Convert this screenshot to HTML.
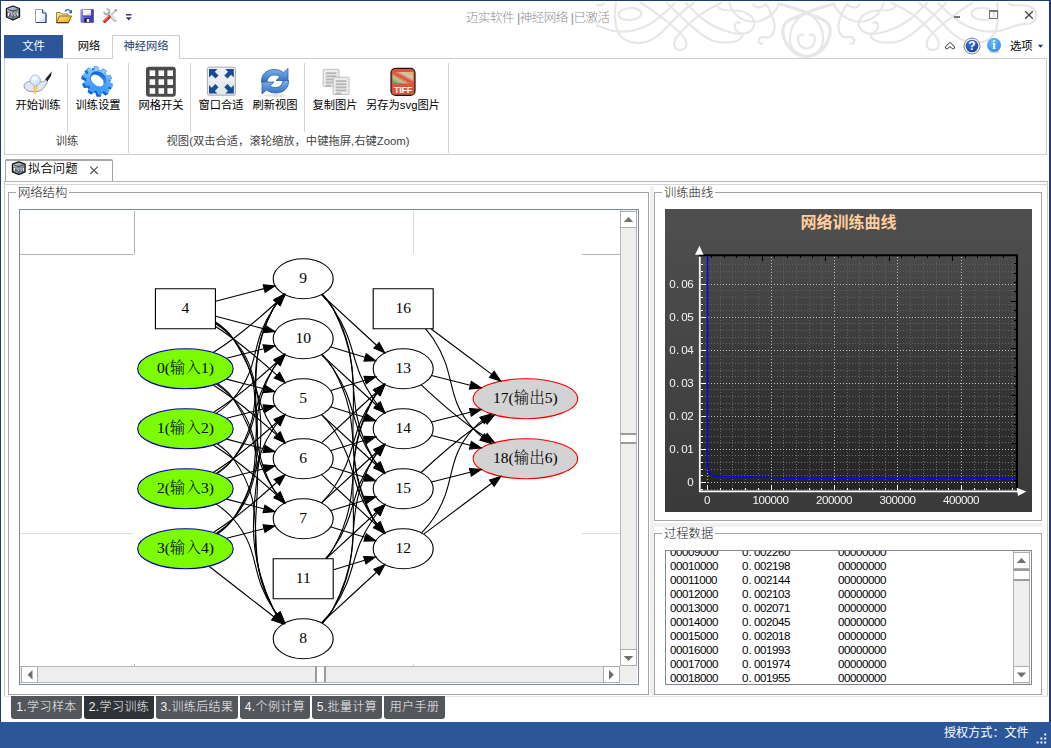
<!DOCTYPE html>
<html lang="zh-CN"><head><meta charset="utf-8"><title>迈实软件 |神经网络 |已激活</title>
<style>
*{box-sizing:border-box;margin:0;padding:0}
html,body{width:1051px;height:748px;overflow:hidden;background:#fff}
body{position:relative;font:12px/14px "Liberation Sans","Noto Sans CJK SC",sans-serif;color:#000}
.a{position:absolute}
.t{position:absolute;white-space:nowrap}
.c{position:absolute;white-space:nowrap;text-align:center;font-size:11.3px}
.sep{position:absolute;width:1px;background:#d4d4d4}
.gb{position:absolute;border:1px solid #a5a5a5}
.gbl{position:absolute;background:#fff;padding:0 2px;white-space:nowrap;color:#111;font-size:12.3px;font-weight:300}
.btab{position:absolute;top:696px;height:23px;background:#53565b;color:#f4f4f4;border-radius:0 0 3px 3px;text-align:center;line-height:23px;white-space:nowrap;font-size:12px;letter-spacing:.4px;font-weight:300}
.sb{position:absolute;background:#eee}
.sbtn{position:absolute;background:#fff;border:1px solid #adadad}
.mono{font-family:"Liberation Mono","Noto Sans CJK SC",monospace}
.row{position:absolute;left:0;height:14px;white-space:nowrap;font:11.6px/14px "Liberation Sans",sans-serif;letter-spacing:-.45px;color:#000}
.row span{position:absolute;top:0}
.row i{font-style:normal;letter-spacing:2.35px;margin-left:.4px}
</style></head><body>
<!-- title bar -->
<div class="a" style="left:0;top:0;width:1051px;height:35px;background:#fff"></div>
<svg class="a" style="left:596px;top:1px" width="453" height="57" viewBox="596 1 453 57" fill="none" stroke="#e7e7e7" stroke-width="2.200" stroke-linecap="round"><g>
<path d="M604 3.500C598 8 589 3 582 7C573 12 576 24 587 24C596 24 601 27 607 29C612 31 616 31.500 620 31.500C632 32 641 29 650 24C659 19 667 11 674.500 3.500"/>
<path d="M616 3C614.500 10 614.500 22 617 30C620 38 628 43 639 43C650 43 660 35 668 26C675 18 685 9 693.500 3"/>
<ellipse cx="630" cy="14" rx="11.500" ry="6" transform="rotate(-4 630 14)"/>
<path d="M641 3C650 8 660 16 670 24C676 29 683 34 685.500 40C688 46 685 50 680 50C675 50 673 45 675 40C677 35 684 29 690 23C697 16 708 9 721 3"/>
<path d="M667 3C673 9 680 16 689 24C697 31 703 37 712 40.500C721 44 733 43 739 40C741.500 38 743 36 743 33.500"/>
<path d="M686 3C690 7 697 14 702 18.500C708 23 716 28 726 31C732 33 738 34 742 34"/>
<path d="M717 5C718 8 720 9.500 724 10C730 10.500 738 10 744 12C751 14.500 755.500 20 754 26C752.500 31 747 34 742 33.500C737 33 734.500 29 734.800 25.500C735 22.500 738 21.500 739.500 23"/>
<path d="M729.500 3C730.500 8 733 12 737 15.500C742 20 749 22.500 757 21.500C765 20 772 15 776 9.500C777.500 7.500 778.500 5.500 779 4"/>
<path d="M753.500 4.500C755 7 758 8 761 7C763 6.300 764.500 5 766 4.200C769 8 771.500 14 773.500 20C775.500 27 774.500 33 770.500 36.500C767.500 39 763.500 35.500 760.500 37.500C757.500 39.500 758 44.500 762.500 43.500"/>
<path d="M779 4C788 6 798 9 806.500 13C816 17.500 829 19 830 29C831 40 822 56 806.500 56.500" stroke-width="3.200"/>
<path d="M831 4.500C822 8 813 10.500 806.500 13C797 17 791 26 790 36C789 46 794 53 803 55.500"/>
<path d="M803 35C800 33 797.500 36 798 40C798.500 45 802 48.500 806.500 48.500"/>
</g><g transform="translate(1613 0) scale(-1 1)">
<path d="M604 3.500C598 8 589 3 582 7C573 12 576 24 587 24C596 24 601 27 607 29C612 31 616 31.500 620 31.500C632 32 641 29 650 24C659 19 667 11 674.500 3.500"/>
<path d="M616 3C614.500 10 614.500 22 617 30C620 38 628 43 639 43C650 43 660 35 668 26C675 18 685 9 693.500 3"/>
<ellipse cx="630" cy="14" rx="11.500" ry="6" transform="rotate(-4 630 14)"/>
<path d="M641 3C650 8 660 16 670 24C676 29 683 34 685.500 40C688 46 685 50 680 50C675 50 673 45 675 40C677 35 684 29 690 23C697 16 708 9 721 3"/>
<path d="M667 3C673 9 680 16 689 24C697 31 703 37 712 40.500C721 44 733 43 739 40C741.500 38 743 36 743 33.500"/>
<path d="M686 3C690 7 697 14 702 18.500C708 23 716 28 726 31C732 33 738 34 742 34"/>
<path d="M717 5C718 8 720 9.500 724 10C730 10.500 738 10 744 12C751 14.500 755.500 20 754 26C752.500 31 747 34 742 33.500C737 33 734.500 29 734.800 25.500C735 22.500 738 21.500 739.500 23"/>
<path d="M729.500 3C730.500 8 733 12 737 15.500C742 20 749 22.500 757 21.500C765 20 772 15 776 9.500C777.500 7.500 778.500 5.500 779 4"/>
<path d="M753.500 4.500C755 7 758 8 761 7C763 6.300 764.500 5 766 4.200C769 8 771.500 14 773.500 20C775.500 27 774.500 33 770.500 36.500C767.500 39 763.500 35.500 760.500 37.500C757.500 39.500 758 44.500 762.500 43.500"/>
<path d="M779 4C788 6 798 9 806.500 13C816 17.500 829 19 830 29C831 40 822 56 806.500 56.500" stroke-width="3.200"/>
<path d="M831 4.500C822 8 813 10.500 806.500 13C797 17 791 26 790 36C789 46 794 53 803 55.500"/>
<path d="M803 35C800 33 797.500 36 798 40C798.500 45 802 48.500 806.500 48.500"/>
</g></svg>
<div class="t" style="left:466px;top:10px;font-size:12.5px;letter-spacing:-.5px;line-height:16px;color:#8e8e8e;font-weight:300">迈实软件 |神经网络 |已激活</div>
<!-- ribbon tabs -->
<div class="a" style="left:4px;top:35px;width:59px;height:23px;background:#2b579a;color:#fff;text-align:center;line-height:23px;font-size:11.3px">文件</div>
<div class="c" style="left:69px;top:35px;width:40px;line-height:23px">网络</div>
<div class="a" style="left:4px;top:58px;width:1043px;height:97px;border:1px solid #cfcfcf;background:#fff"></div>
<div class="a" style="left:112px;top:35px;width:68px;height:24px;border:1px solid #cfcfcf;border-bottom:none;background:#fff;text-align:center;line-height:21px;color:#26406c;font-size:11.3px">神经网络</div>
<!-- ribbon content -->
<div class="c" style="left:8px;top:98px;width:60px">开始训练</div>
<div class="c" style="left:68px;top:98px;width:60px">训练设置</div>
<div class="c" style="left:131px;top:98px;width:60px">网格开关</div>
<div class="c" style="left:191px;top:98px;width:60px">窗口合适</div>
<div class="c" style="left:245px;top:98px;width:60px">刷新视图</div>
<div class="c" style="left:305px;top:98px;width:60px">复制图片</div>
<div class="c" style="left:358px;top:98px;width:90px">另存为svg图片</div>
<div class="c" style="left:37px;top:134px;width:60px;color:#444">训练</div>
<div class="c" style="left:138px;top:134px;width:300px;color:#444">视图(双击合适，滚轮缩放，中键拖屏,右键Zoom)</div>
<div class="sep" style="left:67px;top:63px;height:69px"></div>
<div class="sep" style="left:128px;top:63px;height:90px"></div>
<div class="sep" style="left:190px;top:63px;height:69px"></div>
<div class="sep" style="left:304px;top:63px;height:69px"></div>
<div class="sep" style="left:448px;top:63px;height:90px"></div>
<!-- right helpers -->
<div class="t" style="left:1010px;top:39px;font-size:11.3px">选项</div>
<!-- document tab -->
<div class="a" style="left:4px;top:181px;width:1044px;height:1px;background:#b4b4b4"></div>
<div class="a" style="left:5px;top:159px;width:108px;height:22px;border:1px solid #a2a2a2;border-top:2px solid #a8a8a8;border-bottom:none;border-radius:2px 2px 0 0;background:#fff"></div>
<div class="t" style="left:28px;top:161px;font-size:12.4px;line-height:16px;font-weight:350">拟合问题</div>
<!-- main frame -->
<div class="a" style="left:4px;top:182px;width:1044px;height:514px;border-left:1px solid #c8c8c8;border-right:1px solid #c8c8c8"></div>
<div class="a" style="left:4px;top:184px;width:1044px;height:1px;background:#d6d6d6"></div>
<div class="a" style="left:650px;top:186px;width:4px;height:509px;background:#f0f0f0"></div>
<!-- left group box -->
<div class="gb" style="left:8px;top:192px;width:641px;height:503px"></div>
<div class="gbl" style="left:16px;top:186px">网络结构</div>
<div class="a" style="left:19px;top:209px;width:620px;height:476px;border:1px solid #7f8a9c;background:#fff;overflow:hidden">
 <div class="a" style="left:0;top:44px;width:115px;height:1px;background:#b4b4b4"></div>
 <div class="a" style="left:561px;top:44px;width:39px;height:1px;background:#b4b4b4"></div>
 <div class="a" style="left:114px;top:1px;width:1px;height:44px;background:#b4b4b4"></div>
 <div class="a" style="left:114px;top:454px;width:1px;height:2px;background:#b4b4b4"></div>
 <div class="a" style="left:393px;top:1px;width:1px;height:43px;background:#dcdcdc"></div>
 <div class="a" style="left:393px;top:454px;width:1px;height:2px;background:#dcdcdc"></div>
 <div class="a" style="left:0;top:323px;width:114px;height:1px;background:#dcdcdc"></div>
 <div class="a" style="left:562px;top:323px;width:38px;height:1px;background:#dcdcdc"></div>
 <svg class="a" style="left:0;top:0" width="600" height="456" viewBox="20 210 600 456" font-family='"Liberation Serif","Noto Serif CJK SC",serif' font-size="14" font-weight="300">
 <g transform="translate(133.2 254.3) scale(1.1111) translate(4 364)">
<polygon fill="white" stroke="none" points="-4,4 -4,-364 400,-364 400,4 -4,4"/>
<g>
<ellipse fill="#7cfc00" stroke="#0000a8" cx="43" cy="-261" rx="43" ry="18"/>
<text text-anchor="middle" x="43" y="-257.0">0(输入1)</text>
</g>
<g>
<ellipse fill="none" stroke="black" cx="149" cy="-234" rx="27" ry="18"/>
<text text-anchor="middle" x="149" y="-230.0">5</text>
</g>
<g>
<path fill="none" stroke="black" d="M80.08,-251.63C90.93,-248.82 102.8,-245.73 113.54,-242.95"/>
<polygon fill="black" stroke="black" points="114.62,-246.28 123.42,-240.38 112.86,-239.51 114.62,-246.28"/>
</g>
<g>
<ellipse fill="none" stroke="black" cx="149" cy="-180" rx="27" ry="18"/>
<text text-anchor="middle" x="149" y="-176.0">6</text>
</g>
<g>
<path fill="none" stroke="black" d="M68.39,-246.17C74.27,-242.36 80.45,-238.16 86,-234 99.54,-223.83 113.85,-211.49 125.3,-201.18"/>
<polygon fill="black" stroke="black" points="127.69,-203.73 132.73,-194.41 122.98,-198.56 127.69,-203.73"/>
</g>
<g>
<ellipse fill="none" stroke="black" cx="149" cy="-126" rx="27" ry="18"/>
<text text-anchor="middle" x="149" y="-122.0">7</text>
</g>
<g>
<path fill="none" stroke="black" d="M70.73,-247.14C76.27,-243.41 81.71,-239 86,-234 111.64,-204.09 100,-185.68 122,-153 123.12,-151.34 124.34,-149.69 125.63,-148.07"/>
<polygon fill="black" stroke="black" points="128.46,-150.15 132.42,-140.33 123.2,-145.54 128.46,-150.15"/>
</g>
<g>
<ellipse fill="none" stroke="black" cx="149" cy="-18" rx="27" ry="18"/>
<text text-anchor="middle" x="149" y="-14.0">8</text>
</g>
<g>
<path fill="none" stroke="black" d="M72.06,-247.53C77.39,-243.82 82.41,-239.32 86,-234 133.85,-163.13 82.71,-120.95 122,-45 122.92,-43.22 123.99,-41.48 125.17,-39.8"/>
<polygon fill="black" stroke="black" points="128.03,-41.84 131.69,-31.9 122.63,-37.38 128.03,-41.84"/>
</g>
<g>
<ellipse fill="none" stroke="black" cx="149" cy="-342" rx="27" ry="18"/>
<text text-anchor="middle" x="149" y="-338.0">9</text>
</g>
<g>
<path fill="none" stroke="black" d="M68.39,-275.83C74.27,-279.64 80.45,-283.84 86,-288 99.54,-298.17 113.85,-310.51 125.3,-320.82"/>
<polygon fill="black" stroke="black" points="122.98,-323.44 132.73,-327.59 127.69,-318.27 122.98,-323.44"/>
</g>
<g>
<ellipse fill="none" stroke="black" cx="149" cy="-288" rx="27" ry="18"/>
<text text-anchor="middle" x="149" y="-284.0">10</text>
</g>
<g>
<path fill="none" stroke="black" d="M80.08,-270.37C90.93,-273.18 102.8,-276.27 113.54,-279.05"/>
<polygon fill="black" stroke="black" points="112.86,-282.49 123.42,-281.62 114.62,-275.72 112.86,-282.49"/>
</g>
<g>
<ellipse fill="#7cfc00" stroke="#0000a8" cx="43" cy="-207" rx="43" ry="18"/>
<text text-anchor="middle" x="43" y="-203.0">1(输入2)</text>
</g>
<g>
<path fill="none" stroke="black" d="M80.08,-216.37C90.93,-219.18 102.8,-222.27 113.54,-225.05"/>
<polygon fill="black" stroke="black" points="112.86,-228.49 123.42,-227.62 114.62,-221.72 112.86,-228.49"/>
</g>
<g>
<path fill="none" stroke="black" d="M80.08,-197.63C90.93,-194.82 102.8,-191.73 113.54,-188.95"/>
<polygon fill="black" stroke="black" points="114.62,-192.28 123.42,-186.38 112.86,-185.51 114.62,-192.28"/>
</g>
<g>
<path fill="none" stroke="black" d="M68.39,-192.17C74.27,-188.36 80.45,-184.16 86,-180 99.54,-169.83 113.85,-157.49 125.3,-147.18"/>
<polygon fill="black" stroke="black" points="127.69,-149.73 132.73,-140.41 122.98,-144.56 127.69,-149.73"/>
</g>
<g>
<path fill="none" stroke="black" d="M71.77,-193.32C77.12,-189.63 82.22,-185.18 86,-180 122.59,-129.83 91.49,-99.09 122,-45 122.98,-43.26 124.11,-41.54 125.32,-39.88"/>
<polygon fill="black" stroke="black" points="128.17,-41.93 131.93,-32.02 122.81,-37.42 128.17,-41.93"/>
</g>
<g>
<path fill="none" stroke="black" d="M70.73,-220.86C76.27,-224.59 81.71,-229 86,-234 111.64,-263.91 100,-282.32 122,-315 123.12,-316.66 124.34,-318.31 125.63,-319.93"/>
<polygon fill="black" stroke="black" points="123.2,-322.46 132.42,-327.67 128.46,-317.85 123.2,-322.46"/>
</g>
<g>
<path fill="none" stroke="black" d="M68.39,-221.83C74.27,-225.64 80.45,-229.84 86,-234 99.54,-244.17 113.85,-256.51 125.3,-266.82"/>
<polygon fill="black" stroke="black" points="122.98,-269.44 132.73,-273.59 127.69,-264.27 122.98,-269.44"/>
</g>
<g>
<ellipse fill="#7cfc00" stroke="#0000a8" cx="43" cy="-153" rx="43" ry="18"/>
<text text-anchor="middle" x="43" y="-149.0">2(输入3)</text>
</g>
<g>
<path fill="none" stroke="black" d="M68.39,-167.83C74.27,-171.64 80.45,-175.84 86,-180 99.54,-190.17 113.85,-202.51 125.3,-212.82"/>
<polygon fill="black" stroke="black" points="122.98,-215.44 132.73,-219.59 127.69,-210.27 122.98,-215.44"/>
</g>
<g>
<path fill="none" stroke="black" d="M80.08,-162.37C90.93,-165.18 102.8,-168.27 113.54,-171.05"/>
<polygon fill="black" stroke="black" points="112.86,-174.49 123.42,-173.62 114.62,-167.72 112.86,-174.49"/>
</g>
<g>
<path fill="none" stroke="black" d="M80.08,-143.63C90.93,-140.82 102.8,-137.73 113.54,-134.95"/>
<polygon fill="black" stroke="black" points="114.62,-138.28 123.42,-132.38 112.86,-131.51 114.62,-138.28"/>
</g>
<g>
<path fill="none" stroke="black" d="M70.73,-139.14C76.27,-135.41 81.71,-131 86,-126 111.64,-96.09 100,-77.68 122,-45 123.12,-43.34 124.34,-41.69 125.63,-40.07"/>
<polygon fill="black" stroke="black" points="128.46,-42.15 132.42,-32.33 123.2,-37.54 128.46,-42.15"/>
</g>
<g>
<path fill="none" stroke="black" d="M71.77,-166.68C77.12,-170.37 82.22,-174.82 86,-180 122.59,-230.17 91.49,-260.91 122,-315 122.98,-316.74 124.11,-318.46 125.32,-320.12"/>
<polygon fill="black" stroke="black" points="122.81,-322.58 131.93,-327.98 128.17,-318.07 122.81,-322.58"/>
</g>
<g>
<path fill="none" stroke="black" d="M70.73,-166.86C76.27,-170.59 81.71,-175 86,-180 111.64,-209.91 100,-228.32 122,-261 123.12,-262.66 124.34,-264.31 125.63,-265.93"/>
<polygon fill="black" stroke="black" points="123.2,-268.46 132.42,-273.67 128.46,-263.85 123.2,-268.46"/>
</g>
<g>
<ellipse fill="#7cfc00" stroke="#0000a8" cx="43" cy="-99" rx="43" ry="18"/>
<text text-anchor="middle" x="43" y="-95.0">3(输入4)</text>
</g>
<g>
<path fill="none" stroke="black" d="M70.73,-112.86C76.27,-116.59 81.71,-121 86,-126 111.64,-155.91 100,-174.32 122,-207 123.12,-208.66 124.34,-210.31 125.63,-211.93"/>
<polygon fill="black" stroke="black" points="123.2,-214.46 132.42,-219.67 128.46,-209.85 123.2,-214.46"/>
</g>
<g>
<path fill="none" stroke="black" d="M68.39,-113.83C74.27,-117.64 80.45,-121.84 86,-126 99.54,-136.17 113.85,-148.51 125.3,-158.82"/>
<polygon fill="black" stroke="black" points="122.98,-161.44 132.73,-165.59 127.69,-156.27 122.98,-161.44"/>
</g>
<g>
<path fill="none" stroke="black" d="M80.08,-108.37C90.93,-111.18 102.8,-114.27 113.54,-117.05"/>
<polygon fill="black" stroke="black" points="112.86,-120.49 123.42,-119.62 114.62,-113.72 112.86,-120.49"/>
</g>
<g>
<path fill="none" stroke="black" d="M64.55,-83C81.13,-70.08 104.55,-51.84 122.36,-37.97"/>
<polygon fill="black" stroke="black" points="124.86,-40.46 130.6,-31.55 120.56,-34.93 124.86,-40.46"/>
</g>
<g>
<path fill="none" stroke="black" d="M72.06,-112.47C77.39,-116.18 82.41,-120.68 86,-126 133.85,-196.87 82.71,-239.05 122,-315 122.92,-316.78 123.99,-318.52 125.17,-320.2"/>
<polygon fill="black" stroke="black" points="122.63,-322.62 131.69,-328.1 128.03,-318.16 122.63,-322.62"/>
</g>
<g>
<path fill="none" stroke="black" d="M71.77,-112.68C77.12,-116.37 82.22,-120.82 86,-126 122.59,-176.17 91.49,-206.91 122,-261 122.98,-262.74 124.11,-264.46 125.32,-266.12"/>
<polygon fill="black" stroke="black" points="122.81,-268.58 131.93,-273.98 128.17,-264.07 122.81,-268.58"/>
</g>
<g>
<polygon fill="none" stroke="black" points="70,-333 16,-333 16,-297 70,-297 70,-333"/>
<text text-anchor="middle" x="43" y="-311.0">4</text>
</g>
<g>
<path fill="none" stroke="black" d="M70.17,-299.01C75.5,-295.52 81.01,-291.75 86,-288 99.54,-277.83 113.85,-265.49 125.3,-255.18"/>
<polygon fill="black" stroke="black" points="127.69,-257.73 132.73,-248.41 122.98,-252.56 127.69,-257.73"/>
</g>
<g>
<path fill="none" stroke="black" d="M70.3,-301.44C75.98,-297.64 81.6,-293.13 86,-288 111.64,-258.09 100,-239.68 122,-207 123.12,-205.34 124.34,-203.69 125.63,-202.07"/>
<polygon fill="black" stroke="black" points="128.46,-204.15 132.42,-194.33 123.2,-199.54 128.46,-204.15"/>
</g>
<g>
<path fill="none" stroke="black" d="M70.03,-302.5C76,-298.58 81.81,-293.74 86,-288 122.59,-237.83 91.49,-207.09 122,-153 122.98,-151.26 124.11,-149.54 125.32,-147.88"/>
<polygon fill="black" stroke="black" points="128.17,-149.93 131.93,-140.02 122.81,-145.42 128.17,-149.93"/>
</g>
<g>
<path fill="none" stroke="black" d="M70.05,-303.1C76.17,-299.13 82.05,-294.12 86,-288 145.22,-196.28 73.84,-142.98 122,-45 122.88,-43.2 123.93,-41.45 125.09,-39.75"/>
<polygon fill="black" stroke="black" points="127.94,-41.79 131.56,-31.83 122.52,-37.36 127.94,-41.79"/>
</g>
<g>
<path fill="none" stroke="black" d="M70.24,-321.81C83.41,-325.23 99.53,-329.42 113.67,-333.09"/>
<polygon fill="black" stroke="black" points="112.99,-336.53 123.55,-335.65 114.75,-329.75 112.99,-336.53"/>
</g>
<g>
<path fill="none" stroke="black" d="M70.24,-308.19C83.41,-304.77 99.53,-300.58 113.67,-296.91"/>
<polygon fill="black" stroke="black" points="114.75,-300.25 123.55,-294.35 112.99,-293.47 114.75,-300.25"/>
</g>
<g>
<ellipse fill="none" stroke="black" cx="239" cy="-99" rx="27" ry="18"/>
<text text-anchor="middle" x="239" y="-95.0">12</text>
</g>
<g>
<path fill="none" stroke="black" d="M165.58,-219.67C169.28,-215.79 173.02,-211.43 176,-207 198,-174.32 190,-158.68 212,-126 213.12,-124.34 214.34,-122.69 215.63,-121.07"/>
<polygon fill="black" stroke="black" points="218.46,-123.15 222.42,-113.33 213.2,-118.54 218.46,-123.15"/>
</g>
<g>
<ellipse fill="none" stroke="black" cx="239" cy="-261" rx="27" ry="18"/>
<text text-anchor="middle" x="239" y="-257.0">13</text>
</g>
<g>
<path fill="none" stroke="black" d="M174.05,-241.38C183.44,-244.26 194.36,-247.61 204.5,-250.72"/>
<polygon fill="black" stroke="black" points="203.7,-254.14 214.29,-253.72 205.75,-247.45 203.7,-254.14"/>
</g>
<g>
<ellipse fill="none" stroke="black" cx="239" cy="-207" rx="27" ry="18"/>
<text text-anchor="middle" x="239" y="-203.0">14</text>
</g>
<g>
<path fill="none" stroke="black" d="M174.05,-226.62C183.44,-223.74 194.36,-220.39 204.5,-217.28"/>
<polygon fill="black" stroke="black" points="205.75,-220.55 214.29,-214.28 203.7,-213.86 205.75,-220.55"/>
</g>
<g>
<ellipse fill="none" stroke="black" cx="239" cy="-153" rx="27" ry="18"/>
<text text-anchor="middle" x="239" y="-149.0">15</text>
</g>
<g>
<path fill="none" stroke="black" d="M165.73,-219.52C179.37,-206.96 199.3,-188.62 214.77,-174.38"/>
<polygon fill="black" stroke="black" points="217.42,-176.7 222.4,-167.36 212.68,-171.55 217.42,-176.7"/>
</g>
<g>
<path fill="none" stroke="black" d="M165.73,-165.52C179.37,-152.96 199.3,-134.62 214.77,-120.38"/>
<polygon fill="black" stroke="black" points="217.42,-122.7 222.4,-113.36 212.68,-117.55 217.42,-122.7"/>
</g>
<g>
<path fill="none" stroke="black" d="M165.73,-194.48C179.37,-207.04 199.3,-225.38 214.77,-239.62"/>
<polygon fill="black" stroke="black" points="212.68,-242.45 222.4,-246.64 217.42,-237.3 212.68,-242.45"/>
</g>
<g>
<path fill="none" stroke="black" d="M174.05,-187.38C183.44,-190.26 194.36,-193.61 204.5,-196.72"/>
<polygon fill="black" stroke="black" points="203.7,-200.14 214.29,-199.72 205.75,-193.45 203.7,-200.14"/>
</g>
<g>
<path fill="none" stroke="black" d="M174.05,-172.62C183.44,-169.74 194.36,-166.39 204.5,-163.28"/>
<polygon fill="black" stroke="black" points="205.75,-166.55 214.29,-160.28 203.7,-159.86 205.75,-166.55"/>
</g>
<g>
<path fill="none" stroke="black" d="M174.05,-118.62C183.44,-115.74 194.36,-112.39 204.5,-109.28"/>
<polygon fill="black" stroke="black" points="205.75,-112.55 214.29,-106.28 203.7,-105.86 205.75,-112.55"/>
</g>
<g>
<path fill="none" stroke="black" d="M165.58,-140.33C169.28,-144.21 173.02,-148.57 176,-153 198,-185.68 190,-201.32 212,-234 213.12,-235.66 214.34,-237.31 215.63,-238.93"/>
<polygon fill="black" stroke="black" points="213.2,-241.46 222.42,-246.67 218.46,-236.85 213.2,-241.46"/>
</g>
<g>
<path fill="none" stroke="black" d="M165.73,-140.48C179.37,-153.04 199.3,-171.38 214.77,-185.62"/>
<polygon fill="black" stroke="black" points="212.68,-188.45 222.4,-192.64 217.42,-183.3 212.68,-188.45"/>
</g>
<g>
<path fill="none" stroke="black" d="M174.05,-133.38C183.44,-136.26 194.36,-139.61 204.5,-142.72"/>
<polygon fill="black" stroke="black" points="203.7,-146.14 214.29,-145.72 205.75,-139.45 203.7,-146.14"/>
</g>
<g>
<path fill="none" stroke="black" d="M165.73,-32.48C179.37,-45.04 199.3,-63.38 214.77,-77.62"/>
<polygon fill="black" stroke="black" points="212.68,-80.45 222.4,-84.64 217.42,-75.3 212.68,-80.45"/>
</g>
<g>
<path fill="none" stroke="black" d="M166.31,-31.9C170,-35.79 173.55,-40.26 176,-45 215.29,-120.95 172.71,-158.05 212,-234 212.92,-235.78 213.99,-237.52 215.17,-239.2"/>
<polygon fill="black" stroke="black" points="212.63,-241.62 221.69,-247.1 218.03,-237.16 212.63,-241.62"/>
</g>
<g>
<path fill="none" stroke="black" d="M166.07,-32.02C169.77,-35.91 173.38,-40.35 176,-45 206.51,-99.09 181.49,-125.91 212,-180 212.98,-181.74 214.11,-183.46 215.32,-185.12"/>
<polygon fill="black" stroke="black" points="212.81,-187.58 221.93,-192.98 218.17,-183.07 212.81,-187.58"/>
</g>
<g>
<path fill="none" stroke="black" d="M165.58,-32.33C169.28,-36.21 173.02,-40.57 176,-45 198,-77.68 190,-93.32 212,-126 213.12,-127.66 214.34,-129.31 215.63,-130.93"/>
<polygon fill="black" stroke="black" points="213.2,-133.46 222.42,-138.67 218.46,-128.85 213.2,-133.46"/>
</g>
<g>
<path fill="none" stroke="black" d="M166.31,-328.1C170,-324.21 173.55,-319.74 176,-315 215.29,-239.05 172.71,-201.95 212,-126 212.92,-124.22 213.99,-122.48 215.17,-120.8"/>
<polygon fill="black" stroke="black" points="218.03,-122.84 221.69,-112.9 212.63,-118.38 218.03,-122.84"/>
</g>
<g>
<path fill="none" stroke="black" d="M165.73,-327.52C179.37,-314.96 199.3,-296.62 214.77,-282.38"/>
<polygon fill="black" stroke="black" points="217.42,-284.7 222.4,-275.36 212.68,-279.55 217.42,-284.7"/>
</g>
<g>
<path fill="none" stroke="black" d="M165.58,-327.67C169.28,-323.79 173.02,-319.43 176,-315 198,-282.32 190,-266.68 212,-234 213.12,-232.34 214.34,-230.69 215.63,-229.07"/>
<polygon fill="black" stroke="black" points="218.46,-231.15 222.42,-221.33 213.2,-226.54 218.46,-231.15"/>
</g>
<g>
<path fill="none" stroke="black" d="M166.07,-327.98C169.77,-324.09 173.38,-319.65 176,-315 206.51,-260.91 181.49,-234.09 212,-180 212.98,-178.26 214.11,-176.54 215.32,-174.88"/>
<polygon fill="black" stroke="black" points="218.17,-176.93 221.93,-167.02 212.81,-172.42 218.17,-176.93"/>
</g>
<g>
<path fill="none" stroke="black" d="M166.07,-273.98C169.77,-270.09 173.38,-265.65 176,-261 206.51,-206.91 181.49,-180.09 212,-126 212.98,-124.26 214.11,-122.54 215.32,-120.88"/>
<polygon fill="black" stroke="black" points="218.17,-122.93 221.93,-113.02 212.81,-118.42 218.17,-122.93"/>
</g>
<g>
<path fill="none" stroke="black" d="M174.05,-280.62C183.44,-277.74 194.36,-274.39 204.5,-271.28"/>
<polygon fill="black" stroke="black" points="205.75,-274.55 214.29,-268.28 203.7,-267.86 205.75,-274.55"/>
</g>
<g>
<path fill="none" stroke="black" d="M165.73,-273.52C179.37,-260.96 199.3,-242.62 214.77,-228.38"/>
<polygon fill="black" stroke="black" points="217.42,-230.7 222.4,-221.36 212.68,-225.55 217.42,-230.7"/>
</g>
<g>
<path fill="none" stroke="black" d="M165.58,-273.67C169.28,-269.79 173.02,-265.43 176,-261 198,-228.32 190,-212.68 212,-180 213.12,-178.34 214.34,-176.69 215.63,-175.07"/>
<polygon fill="black" stroke="black" points="218.46,-177.15 222.42,-167.33 213.2,-172.54 218.46,-177.15"/>
</g>
<g>
<polygon fill="none" stroke="black" points="176,-90 122,-90 122,-54 176,-54 176,-90"/>
<text text-anchor="middle" x="149" y="-68.0">11</text>
</g>
<g>
<path fill="none" stroke="black" d="M176.4,-80.1C185.18,-82.79 195.07,-85.83 204.32,-88.67"/>
<polygon fill="black" stroke="black" points="203.43,-92.05 214.02,-91.64 205.48,-85.36 203.43,-92.05"/>
</g>
<g>
<path fill="none" stroke="black" d="M169.79,-90.19C172.12,-92.97 174.27,-95.94 176,-99 206.51,-153.09 181.49,-179.91 212,-234 212.98,-235.74 214.11,-237.46 215.32,-239.12"/>
<polygon fill="black" stroke="black" points="212.81,-241.58 221.93,-246.98 218.17,-237.07 212.81,-241.58"/>
</g>
<g>
<path fill="none" stroke="black" d="M169.09,-90.15C171.58,-92.98 173.97,-95.98 176,-99 198,-131.68 190,-147.32 212,-180 213.12,-181.66 214.34,-183.31 215.63,-184.93"/>
<polygon fill="black" stroke="black" points="213.2,-187.46 222.42,-192.67 218.46,-182.85 213.2,-187.46"/>
</g>
<g>
<path fill="none" stroke="black" d="M169.97,-90.38C183.28,-102.63 200.82,-118.78 214.76,-131.61"/>
<polygon fill="black" stroke="black" points="212.76,-134.53 222.49,-138.72 217.5,-129.38 212.76,-134.53"/>
</g>
<g>
<ellipse fill="lightgray" stroke="red" cx="349" cy="-234" rx="47" ry="18"/>
<text text-anchor="middle" x="349" y="-230.0">17(输出5)</text>
</g>
<g>
<path fill="none" stroke="black" d="M255.58,-113.33C259.28,-117.21 263.02,-121.57 266,-126 288,-158.68 275.75,-177.62 302,-207 304.35,-209.64 307.03,-212.08 309.87,-214.34"/>
<polygon fill="black" stroke="black" points="308.04,-217.33 318.23,-220.21 312.06,-211.6 308.04,-217.33"/>
</g>
<g>
<ellipse fill="lightgray" stroke="red" cx="349" cy="-180" rx="47" ry="18"/>
<text text-anchor="middle" x="349" y="-176.0">18(输出6)</text>
</g>
<g>
<path fill="none" stroke="black" d="M257.83,-112.38C274.33,-124.74 299.15,-143.36 318.57,-157.93"/>
<polygon fill="black" stroke="black" points="316.7,-160.9 326.8,-164.1 320.9,-155.3 316.7,-160.9"/>
</g>
<g>
<path fill="none" stroke="black" d="M264.51,-254.87C274.81,-252.3 287.19,-249.2 299.22,-246.2"/>
<polygon fill="black" stroke="black" points="300.33,-249.52 309.19,-243.7 298.64,-242.73 300.33,-249.52"/>
</g>
<g>
<path fill="none" stroke="black" d="M255.13,-246.4C267.3,-235.02 285.08,-219.17 302,-207 305.38,-204.57 309,-202.15 312.66,-199.83"/>
<polygon fill="black" stroke="black" points="314.5,-202.81 321.2,-194.6 310.84,-196.84 314.5,-202.81"/>
</g>
<g>
<path fill="none" stroke="black" d="M264.51,-213.13C274.81,-215.7 287.19,-218.8 299.22,-221.8"/>
<polygon fill="black" stroke="black" points="298.64,-225.27 309.19,-224.3 300.33,-218.48 298.64,-225.27"/>
</g>
<g>
<path fill="none" stroke="black" d="M264.51,-200.87C274.81,-198.3 287.19,-195.2 299.22,-192.2"/>
<polygon fill="black" stroke="black" points="300.33,-195.52 309.19,-189.7 298.64,-188.73 300.33,-195.52"/>
</g>
<g>
<path fill="none" stroke="black" d="M255.13,-167.6C267.3,-178.98 285.08,-194.83 302,-207 305.38,-209.43 309,-211.85 312.66,-214.17"/>
<polygon fill="black" stroke="black" points="310.84,-217.16 321.2,-219.4 314.5,-211.19 310.84,-217.16"/>
</g>
<g>
<path fill="none" stroke="black" d="M264.51,-159.13C274.81,-161.7 287.19,-164.8 299.22,-167.8"/>
<polygon fill="black" stroke="black" points="298.64,-171.27 309.19,-170.3 300.33,-164.48 298.64,-171.27"/>
</g>
<g>
<polygon fill="none" stroke="black" points="266,-333 212,-333 212,-297 266,-297 266,-333"/>
<text text-anchor="middle" x="239" y="-311.0">16</text>
</g>
<g>
<path fill="none" stroke="black" d="M264.24,-296.82C280.38,-284.72 301.68,-268.74 318.76,-255.93"/>
<polygon fill="black" stroke="black" points="320.86,-258.73 326.76,-249.93 316.66,-253.13 320.86,-258.73"/>
</g>
<g>
<path fill="none" stroke="black" d="M259.09,-296.85C261.58,-294.02 263.97,-291.02 266,-288 288,-255.32 275.75,-236.38 302,-207 304.35,-204.36 307.03,-201.92 309.87,-199.66"/>
<polygon fill="black" stroke="black" points="312.06,-202.4 318.23,-193.79 308.04,-196.67 312.06,-202.4"/>
</g>
 </g></svg>
 <!-- scrollbars -->
 <div class="sb" style="left:600px;top:0;width:17px;height:456px;border-left:1px solid #b6b6b6;border-right:1px solid #b6b6b6"></div>
 <div class="sb" style="left:0;top:456px;width:600px;height:17px;border-top:1px solid #b6b6b6;border-bottom:1px solid #b6b6b6"></div>
 <div class="sb" style="left:600px;top:456px;width:17px;height:17px"></div>
 <div class="sbtn" style="left:600px;top:1px;width:17px;height:17px"></div>
 <div class="sbtn" style="left:600px;top:439px;width:17px;height:17px"></div>
 <div class="sbtn" style="left:600px;top:223px;width:17px;height:11px;border-left-color:#b6b6b6;border-right-color:#b6b6b6;border-top:2px solid #9c9c9c;border-bottom:2px solid #9c9c9c"></div>
 <div class="sbtn" style="left:1px;top:456px;width:17px;height:17px"></div>
 <div class="sbtn" style="left:583px;top:456px;width:17px;height:17px"></div>
 <div class="sbtn" style="left:295px;top:456px;width:11px;height:17px;border-top-color:#b6b6b6;border-bottom-color:#b6b6b6;border-left:2px solid #9c9c9c;border-right:2px solid #9c9c9c"></div>
 <svg class="a" style="left:600px;top:0" width="17" height="456"><path d="M3.800 12l4.700-5 4.700 5zM3.800 446l4.700 5 4.700-5z" fill="#707070"/></svg>
 <svg class="a" style="left:0;top:456px" width="600" height="17"><path d="M12.500 4l-5 4.700 5 4.700zM589 4l5 4.700-5 4.700z" fill="#707070"/></svg>
</div>
<!-- right top group box -->
<div class="gb" style="left:654px;top:192px;width:388px;height:329px"></div>
<div class="gbl" style="left:662px;top:186px">训练曲线</div>
<div class="a" style="left:665px;top:209px;width:367px;height:303px">
<svg width="367" height="303" viewBox="0 0 367 303" style="display:block">
<defs><linearGradient id="cg" x1="0" y1="0" x2="0" y2="1"><stop offset="0" stop-color="#4f4f4f"/><stop offset="1" stop-color="#3a3a3a"/></linearGradient><linearGradient id="pg" x1="0" y1="0" x2="0" y2="1"><stop offset="0" stop-color="#4a4a4a"/><stop offset="1" stop-color="#242424"/></linearGradient><linearGradient id="mg" gradientUnits="userSpaceOnUse" x1="0" y1="46" x2="0" y2="282"><stop offset="0" stop-color="#5c5c5c"/><stop offset="1" stop-color="#6e6e6e"/></linearGradient><filter id="nf" x="0" y="0" width="100%" height="100%" filterUnits="userSpaceOnUse"><feOffset dx="0" dy="0"/></filter></defs>
<rect width="367" height="303" fill="url(#cg)"/>
<rect x="34.8" y="46.2" width="317.2" height="236.1" fill="url(#pg)"/>
<path d="M55.5 48.2V281.3M67.5 48.2V281.3M80.5 48.2V281.3M93.5 48.2V281.3M118.5 48.2V281.3M131.5 48.2V281.3M144.5 48.2V281.3M156.5 48.2V281.3M182.5 48.2V281.3M194.5 48.2V281.3M207.5 48.2V281.3M220.5 48.2V281.3M245.5 48.2V281.3M258.5 48.2V281.3M271.5 48.2V281.3M283.5 48.2V281.3M309.5 48.2V281.3M321.5 48.2V281.3M334.5 48.2V281.3M347.5 48.2V281.3M36.8 280.5H351.0M36.8 266.5H351.0M36.8 260.5H351.0M36.8 253.5H351.0M36.8 246.5H351.0M36.8 233.5H351.0M36.8 227.5H351.0M36.8 220.5H351.0M36.8 213.5H351.0M36.8 200.5H351.0M36.8 194.5H351.0M36.8 187.5H351.0M36.8 180.5H351.0M36.8 167.5H351.0M36.8 161.5H351.0M36.8 154.5H351.0M36.8 147.5H351.0M36.8 134.5H351.0M36.8 128.5H351.0M36.8 121.5H351.0M36.8 114.5H351.0M36.8 101.5H351.0M36.8 95.5H351.0M36.8 88.5H351.0M36.8 81.5H351.0M36.8 68.5H351.0M36.8 62.5H351.0M36.8 55.5H351.0" stroke="url(#mg)" stroke-width="1" stroke-dasharray="1 2" fill="none" shape-rendering="crispEdges"/>
<path d="M42.5 48.2V281.3M106.5 48.2V281.3M169.5 48.2V281.3M232.5 48.2V281.3M296.5 48.2V281.3M36.8 273.5H351.0M36.8 240.5H351.0M36.8 207.5H351.0M36.8 174.5H351.0M36.8 141.5H351.0M36.8 108.5H351.0M36.8 75.5H351.0" stroke="#bdbdbd" stroke-width="1" stroke-dasharray="1 2" fill="none" shape-rendering="crispEdges"/>
<path d="M42.6 46.2V256.0C42.6 262.0 44.0 265.5 48.0 266.6C52.0 267.6 65.0 267.8 100.0 268.2L120.0 269.3L352.0 269.5" stroke="#0606e6" stroke-width="1.500" fill="none"/>
<path d="M33.8 46.2H353.0M352.0 46.2V282.3" stroke="#000" stroke-width="2" fill="none"/>
<path d="M46.5 47.2v2M351.0 271.5h-2.5M59.5 47.2v2M351.0 262.5h-2.5M71.5 47.2v2M351.0 252.5h-2.5M84.5 47.2v2M351.0 243.5h-2.5M97.5 47.2v5M351.0 234.5h-5M109.5 47.2v2M351.0 224.5h-2.5M122.5 47.2v2M351.0 215.5h-2.5M135.5 47.2v2M351.0 205.5h-2.5M147.5 47.2v2M351.0 196.5h-2.5M160.5 47.2v5M351.0 186.5h-5M173.5 47.2v2M351.0 177.5h-2.5M186.5 47.2v2M351.0 167.5h-2.5M198.5 47.2v2M351.0 158.5h-2.5M211.5 47.2v2M351.0 149.5h-2.5M224.5 47.2v5M351.0 139.5h-5M236.5 47.2v2M351.0 130.5h-2.5M249.5 47.2v2M351.0 120.5h-2.5M262.5 47.2v2M351.0 111.5h-2.5M274.5 47.2v2M351.0 101.5h-2.5M287.5 47.2v5M351.0 92.5h-5M300.5 47.2v2M351.0 82.5h-2.5M312.5 47.2v2M351.0 73.5h-2.5M325.5 47.2v2M351.0 64.5h-2.5M338.5 47.2v2M351.0 54.5h-2.5" stroke="#000" stroke-width="1" fill="none" shape-rendering="crispEdges"/>
<path d="M34.8 47.7V282.3H353.0" stroke="#fff" stroke-width="1.800" fill="none"/>
<path d="M42.5 281.3v-5.500M106.5 281.3v-5.500M169.5 281.3v-5.500M232.5 281.3v-5.500M296.5 281.3v-5.500M55.5 281.3v-2.500M67.5 281.3v-2.500M80.5 281.3v-2.500M93.5 281.3v-2.500M118.5 281.3v-2.500M131.5 281.3v-2.500M144.5 281.3v-2.500M156.5 281.3v-2.500M182.5 281.3v-2.500M194.5 281.3v-2.500M207.5 281.3v-2.500M220.5 281.3v-2.500M245.5 281.3v-2.500M258.5 281.3v-2.500M271.5 281.3v-2.500M283.5 281.3v-2.500M309.5 281.3v-2.500M321.5 281.3v-2.500M334.5 281.3v-2.500M347.5 281.3v-2.500M35.8 273.5h5M35.8 240.5h5M35.8 207.5h5M35.8 174.5h5M35.8 141.5h5M35.8 108.5h5M35.8 75.5h5M35.8 280.5h2.500M35.8 266.5h2.500M35.8 260.5h2.500M35.8 253.5h2.500M35.8 246.5h2.500M35.8 233.5h2.500M35.8 227.5h2.500M35.8 220.5h2.500M35.8 213.5h2.500M35.8 200.5h2.500M35.8 194.5h2.500M35.8 187.5h2.500M35.8 180.5h2.500M35.8 167.5h2.500M35.8 161.5h2.500M35.8 154.5h2.500M35.8 147.5h2.500M35.8 134.5h2.500M35.8 128.5h2.500M35.8 121.5h2.500M35.8 114.5h2.500M35.8 101.5h2.500M35.8 95.5h2.500M35.8 88.5h2.500M35.8 81.5h2.500M35.8 68.5h2.500M35.8 62.5h2.500M35.8 55.5h2.500" stroke="#fff" stroke-width="1" fill="none" shape-rendering="crispEdges"/>
<path d="M34.5 36.7l4 9h-8.500z" fill="#fff"/>
<path d="M361.5 282.5l-10 -3.800l1.500 8.300z" fill="#fff"/>
<g filter="url(#nf)" fill="#f4f4f4" font-family="'Liberation Sans',sans-serif" font-size="11.6">
<text x="22.3" y="277.2">0</text>
<text x="4.3 11.1 16.3 22.3" y="244.2">0.01</text>
<text x="4.3 11.1 16.3 22.3" y="211.2">0.02</text>
<text x="4.3 11.1 16.3 22.3" y="178.2">0.03</text>
<text x="4.3 11.1 16.3 22.3" y="145.2">0.04</text>
<text x="4.3 11.1 16.3 22.3" y="112.2">0.05</text>
<text x="4.3 11.1 16.3 22.3" y="79.2">0.06</text>
<text x="39.1" y="295.0">0</text>
<text x="87.6 93.6 99.6 105.6 111.6 117.6" y="295.0">100000</text>
<text x="151.0 157.0 163.0 169.0 175.0 181.0" y="295.0">200000</text>
<text x="214.5 220.5 226.5 232.5 238.5 244.5" y="295.0">300000</text>
<text x="277.9 283.9 289.9 295.9 301.9 307.9" y="295.0">400000</text>
</g>
<text x="183.5" y="19.30000000000001" text-anchor="middle" fill="#ffcd9c" font-family="'Liberation Sans','Noto Sans CJK SC',sans-serif" font-weight="bold" font-size="16">网络训练曲线</text>
</svg>
</div>
<!-- right bottom group box -->
<div class="a" style="left:654px;top:523px;width:388px;height:4px;background:#f0f0f0"></div>
<div class="gb" style="left:654px;top:533px;width:388px;height:162px"></div>
<div class="gbl" style="left:662px;top:527px">过程数据</div>
<div class="a" style="left:665px;top:550px;width:367px;height:135px;border:1px solid #828790;background:#fff;overflow:hidden">
 <div class="row" style="top:-6px"><span style="left:4px">00009000</span><span style="left:76px">0<i>.</i>002260</span><span style="left:172px">00000000</span></div>
 <div class="row" style="top:8px"><span style="left:4px">00010000</span><span style="left:76px">0<i>.</i>002198</span><span style="left:172px">00000000</span></div>
 <div class="row" style="top:22px"><span style="left:4px">00011000</span><span style="left:76px">0<i>.</i>002144</span><span style="left:172px">00000000</span></div>
 <div class="row" style="top:36px"><span style="left:4px">00012000</span><span style="left:76px">0<i>.</i>002103</span><span style="left:172px">00000000</span></div>
 <div class="row" style="top:50px"><span style="left:4px">00013000</span><span style="left:76px">0<i>.</i>002071</span><span style="left:172px">00000000</span></div>
 <div class="row" style="top:64px"><span style="left:4px">00014000</span><span style="left:76px">0<i>.</i>002045</span><span style="left:172px">00000000</span></div>
 <div class="row" style="top:78px"><span style="left:4px">00015000</span><span style="left:76px">0<i>.</i>002018</span><span style="left:172px">00000000</span></div>
 <div class="row" style="top:92px"><span style="left:4px">00016000</span><span style="left:76px">0<i>.</i>001993</span><span style="left:172px">00000000</span></div>
 <div class="row" style="top:106px"><span style="left:4px">00017000</span><span style="left:76px">0<i>.</i>001974</span><span style="left:172px">00000000</span></div>
 <div class="row" style="top:120px"><span style="left:4px">00018000</span><span style="left:76px">0<i>.</i>001955</span><span style="left:172px">00000000</span></div>
 <div class="sb" style="left:347px;top:0;width:17px;height:133px;border-left:1px solid #b6b6b6;border-right:1px solid #b6b6b6"></div>
 <div class="sbtn" style="left:347px;top:1px;width:17px;height:17px"></div>
 <div class="sbtn" style="left:347px;top:18px;width:17px;height:12px;border-left-color:#b6b6b6;border-right-color:#b6b6b6;border-top:2px solid #9c9c9c;border-bottom:2px solid #9c9c9c"></div>
 <div class="sbtn" style="left:347px;top:115px;width:17px;height:17px"></div>
 <svg class="a" style="left:347px;top:0" width="17" height="133"><path d="M3.800 12l4.700-5 4.700 5zM3.800 121.500l4.700 5 4.700-5z" fill="#707070"/></svg>
</div>
<div class="a" style="left:4px;top:696px;width:1044px;height:1px;background:#e6e6e6"></div>
<!-- bottom tabs -->
<div class="btab" style="left:11px;width:71px">1.学习样本</div>
<div class="btab" style="left:84px;width:70px;background:#2f3338">2.学习训练</div>
<div class="btab" style="left:156px;width:82px">3.训练后结果</div>
<div class="btab" style="left:240px;width:70px">4.个例计算</div>
<div class="btab" style="left:312px;width:70px">5.批量计算</div>
<div class="btab" style="left:384px;width:61px">用户手册</div>
<!-- status bar -->
<div class="a" style="left:0;top:722px;width:1051px;height:26px;background:#2b579a"></div>
<div class="t" style="left:944px;top:726px;color:#fff;font-size:12.1px;line-height:15px">授权方式：文件</div>
<svg class="a" style="left:1036px;top:732px" width="13" height="13"><g fill="#eef2fa"><rect x="8.200" y="1.500" width="2" height="2"/><rect x="4.400" y="5.500" width="2" height="2"/><rect x="8.200" y="5.500" width="2" height="2"/><rect x=".6" y="9.500" width="2" height="2"/><rect x="4.400" y="9.500" width="2" height="2"/><rect x="8.200" y="9.500" width="2" height="2"/></g></svg>
<svg class="a" style="left:5px;top:5px" width="16" height="16" viewBox="0 0 16 16" preserveAspectRatio="none"><defs><linearGradient id="ag1" x1="0" y1="0" x2="1" y2="1"><stop offset="0" stop-color="#c9d6e2"/><stop offset="1" stop-color="#5b7896"/></linearGradient></defs><path d="M8 1L14.500 3.500V12L8 15L1.500 12V3.500Z" fill="url(#ag1)" stroke="#111" stroke-width="1.300" stroke-linejoin="round"/><path d="M3 4.500L8 6L13 4.500M8 6V7.500M8 11.500V14" stroke="#222" stroke-width=".8" fill="none"/><rect x="2.500" y="7.200" width="11" height="4" fill="#fff" stroke="#333" stroke-width=".5"/><text x="8" y="10.600" font-size="4" font-weight="bold" text-anchor="middle" font-family="Liberation Sans,sans-serif" fill="#333" filter="url(#nf)">ANN</text></svg>
<svg class="a" style="left:10.5px;top:160.5px" width="15.5" height="14.5" viewBox="0 0 16 16" preserveAspectRatio="none"><defs><linearGradient id="ag2" x1="0" y1="0" x2="1" y2="1"><stop offset="0" stop-color="#c9d6e2"/><stop offset="1" stop-color="#5b7896"/></linearGradient></defs><path d="M8 1L14.500 3.500V12L8 15L1.500 12V3.500Z" fill="url(#ag2)" stroke="#111" stroke-width="1.300" stroke-linejoin="round"/><path d="M3 4.500L8 6L13 4.500M8 6V7.500M8 11.500V14" stroke="#222" stroke-width=".8" fill="none"/><rect x="2.500" y="7.200" width="11" height="4" fill="#fff" stroke="#333" stroke-width=".5"/><text x="8" y="10.600" font-size="4" font-weight="bold" text-anchor="middle" font-family="Liberation Sans,sans-serif" fill="#333" filter="url(#nf)">ANN</text></svg>
<svg class="a" style="left:34px;top:8px" width="14" height="16" viewBox="0 0 14 16"><defs><linearGradient id="nd" x1="0" y1="0" x2="1" y2="1"><stop offset=".5" stop-color="#fff"/><stop offset="1" stop-color="#c3cfe4"/></linearGradient></defs><path d="M1.500 1.500H8.500L12 5V14.500H1.500Z" fill="url(#nd)" stroke="#8ea3c6" stroke-width="1"/><path d="M12 5.500V14.500H2" fill="none" stroke="#2f4a78" stroke-width="1.200"/><path d="M8.500 1.500V5H12" fill="#dfe7f3" stroke="#2f4a78" stroke-width="1"/></svg>
<svg class="a" style="left:55px;top:7px" width="18" height="17" viewBox="0 0 18 17"><defs><linearGradient id="fo" x1="0" y1="0" x2="1" y2="1"><stop offset="0" stop-color="#ffe48a"/><stop offset="1" stop-color="#e9a70e"/></linearGradient></defs><path d="M1.500 15.500V5.500H5.500L7 7H13V9" fill="#f7dd8d" stroke="#a08645" stroke-width="1"/><path d="M1.500 15.500L4.500 9H16.500L13.500 15.500Z" fill="url(#fo)" stroke="#8a6c1c" stroke-width="1"/><path d="M1.500 15.800H13.500" stroke="#3a2d08" stroke-width="1"/><path d="M10 4.500C11.500 2 14.500 2 15.800 4.800" fill="none" stroke="#2b5bb0" stroke-width="1.200"/><path d="M17 2.500V6.200H13.500Z" fill="#2b5bb0"/></svg>
<svg class="a" style="left:80px;top:9px" width="14" height="14" viewBox="0 0 14 14"><defs><linearGradient id="sv" x1="0" y1="0" x2="1" y2=".3"><stop offset="0" stop-color="#9a97f4"/><stop offset=".5" stop-color="#6461dc"/><stop offset="1" stop-color="#3b39ae"/></linearGradient></defs><path d="M.4 .2H13.800V13.800H1.400L.4 12.800Z" fill="url(#sv)"/><rect x="3" y="1" width="8" height="5.800" fill="#f6f7fb"/><path d="M5.500 6.800L11 2.500V6.800Z" fill="#d5dbea"/><path d="M2.600 6.900H11.400" stroke="#2f2f9a" stroke-width=".8"/><rect x="4.300" y="9.300" width="5.400" height="4.200" fill="#20202e"/><rect x="6.800" y="10" width="2.400" height="3" fill="#f0f0f6"/><rect x="12" y="1.500" width="1" height="1.200" fill="#22226a"/></svg>
<svg class="a" style="left:102px;top:8px" width="16" height="16" viewBox="0 0 16 16" stroke-linecap="round" fill="none"><path d="M8.200 7.800L13.600 2.400" stroke="#b3b6bd" stroke-width="1.900"/><path d="M8.200 7.500L13.400 2.300" stroke="#e3e5e9" stroke-width=".7"/><path d="M13.300 2.700L14.300 1.700" stroke="#84878e" stroke-width="1.300"/><path d="M6.300 5.300L13 12.300" stroke="#b9bcc3" stroke-width="3.200"/><path d="M6.600 5L13.300 12" stroke="#eceef2" stroke-width="1.200"/><path d="M4.570 1.210A2.600 2.600 0 1 1 2.210 3.570" stroke="#aeb1b9" stroke-width="2.100" stroke-linecap="butt"/><path d="M4.400 1.900A1.900 1.900 0 0 1 6.600 3.200" stroke="#e4e6ea" stroke-width=".7"/><path d="M2.700 13.300L7.200 8.800" stroke="#d52b20" stroke-width="3.200"/><path d="M2.300 12.600L6.600 8.300" stroke="#f4a29b" stroke-width=".9"/></svg>
<svg class="a" style="left:125px;top:13px" width="8" height="9" viewBox="0 0 8 9"><rect x="1" y="1" width="5.500" height="1.500" fill="#2a3f66"/><path d="M.8 4.200H6.700L3.750 7.500Z" fill="#2a3f66"/></svg>
<svg class="a" style="left:89px;top:165px" width="10" height="10" viewBox="0 0 10 10"><path d="M1.200 1.600L8.800 9M8.800 1.600L1.200 9" stroke="#555" stroke-width="1.200"/></svg>
<div class="a" style="left:954px;top:16px;width:6px;height:2px;background:#777"></div>
<div class="a" style="left:989px;top:10px;width:9px;height:9px;border:1px solid #777;border-top-width:2px"></div>
<svg class="a" style="left:1024px;top:10px" width="10" height="10" viewBox="0 0 10 10"><path d="M1.200 1.200L8.800 8.800M8.800 1.200L1.200 8.800" stroke="#444" stroke-width="1.300"/></svg>
<svg class="a" style="left:944px;top:40px" width="12" height="11" viewBox="0 0 12 11"><path d="M2.700 8.800C1.400 8.800 .9 7.400 1.800 6.500L6 2.300L10.200 6.500C11.100 7.400 10.600 8.800 9.300 8.800C8.500 8.800 8.100 8.400 6 6.600C3.900 8.400 3.500 8.800 2.700 8.800Z" fill="#fff" stroke="#1f2838" stroke-width="1" stroke-linejoin="round"/></svg>
<svg class="a" style="left:963px;top:37px" width="18" height="18" viewBox="0 0 18 18"><defs><radialGradient id="hq" cx=".4" cy=".3" r=".8"><stop offset="0" stop-color="#3f74d8"/><stop offset="1" stop-color="#163a9a"/></radialGradient></defs><circle cx="9" cy="9" r="8" fill="#f4f4f4" stroke="#8a8a8a" stroke-width="1"/><circle cx="9" cy="9" r="6.300" fill="url(#hq)"/><text x="9" y="13.200" text-anchor="middle" font-family="Liberation Sans,sans-serif" font-weight="bold" font-size="12" fill="#fff">?</text></svg>
<svg class="a" style="left:986px;top:37px" width="16" height="17" viewBox="0 0 16 17"><defs><radialGradient id="hi" cx=".4" cy=".3" r=".9"><stop offset="0" stop-color="#6fbaf8"/><stop offset="1" stop-color="#2484e4"/></radialGradient></defs><ellipse cx="8" cy="15" rx="5" ry="1.300" fill="#d8d8d8"/><circle cx="8" cy="8" r="7" fill="url(#hi)"/><text x="8" y="12.300" text-anchor="middle" font-family="Liberation Serif,serif" font-weight="bold" font-size="12" fill="#fff">i</text></svg>
<svg class="a" style="left:1037px;top:44px" width="7" height="5" viewBox="0 0 7 5"><path d="M.8 .8H6.200L3.500 3.800Z" fill="#1e3566"/></svg>
<svg class="a" style="left:21px;top:65px" width="32" height="32" viewBox="21 65 32 32"><defs><radialGradient id="gb" cx=".4" cy=".3" r=".8"><stop offset="0" stop-color="#fff"/><stop offset="1" stop-color="#b4d2f6"/></radialGradient></defs><path d="M45 79.500L51.800 71.200L51 76L47 82Z" fill="#222"/><path d="M24 86C24 82 30 80.500 36 81.500C40 82 43 82.500 45.500 80L47.500 81.500C46 85 44 88 41.500 90C37 93 24 92.500 24 86Z" fill="#e3e5f0" stroke="#878da6" stroke-width=".9"/><path d="M33.300 86H37.300L35.600 94.500H35Z" fill="#f7b21c"/><path d="M34.800 86H35.800L35.400 94.500Z" fill="#fff3a0"/><circle cx="35.300" cy="80.300" r="5.300" fill="url(#gb)" stroke="#9db7dd" stroke-width=".8"/></svg>
<svg class="a" style="left:80px;top:63px" width="36" height="36" viewBox="80 63 36 36"><defs><linearGradient id="gg" gradientUnits="userSpaceOnUse" x1="-10" y1="-12" x2="8" y2="14"><stop offset="0" stop-color="#a9d8ff"/><stop offset=".45" stop-color="#5cb0fd"/><stop offset="1" stop-color="#2d8cf3"/></linearGradient><linearGradient id="gr" gradientUnits="userSpaceOnUse" x1="-6" y1="-8" x2="6" y2="8"><stop offset="0" stop-color="#1260cf"/><stop offset="1" stop-color="#4aa2fb"/></linearGradient></defs><g transform="translate(96.500 82.400) rotate(38) scale(1 .8)"><path d="M12.0 0.6L15.5 2.0L14.6 5.4L10.9 5.0L9.3 7.5L11.4 10.7L8.7 13.0L5.9 10.4L3.1 11.6L2.9 15.3L-0.6 15.6L-1.4 11.9L-4.3 11.2L-6.6 14.1L-9.6 12.3L-8.1 8.9L-10.0 6.6L-13.7 7.5L-15.0 4.3L-11.8 2.4L-12.0 -0.6L-15.5 -2.0L-14.6 -5.4L-10.9 -5.0L-9.3 -7.5L-11.4 -10.7L-8.7 -13.0L-5.9 -10.4L-3.1 -11.6L-2.9 -15.3L0.6 -15.6L1.4 -11.9L4.3 -11.2L6.6 -14.1L9.6 -12.3L8.1 -8.9L10.0 -6.6L13.7 -7.5L15.0 -4.3L11.8 -2.4Z" fill="#0e66dc" stroke="#0e66dc" stroke-width="1.600" stroke-linejoin="round"/></g><g transform="translate(98 80.300) rotate(38) scale(1 .8)"><path d="M12.0 0.6L15.5 2.0L14.6 5.4L10.9 5.0L9.3 7.5L11.4 10.7L8.7 13.0L5.9 10.4L3.1 11.6L2.9 15.3L-0.6 15.6L-1.4 11.9L-4.3 11.2L-6.6 14.1L-9.6 12.3L-8.1 8.9L-10.0 6.6L-13.7 7.5L-15.0 4.3L-11.8 2.4L-12.0 -0.6L-15.5 -2.0L-14.6 -5.4L-10.9 -5.0L-9.3 -7.5L-11.4 -10.7L-8.7 -13.0L-5.9 -10.4L-3.1 -11.6L-2.9 -15.3L0.6 -15.6L1.4 -11.9L4.3 -11.2L6.6 -14.1L9.6 -12.3L8.1 -8.9L10.0 -6.6L13.7 -7.5L15.0 -4.3L11.8 -2.4Z" fill="url(#gg)" stroke="#56acfc" stroke-width="1.300" stroke-linejoin="round"/></g><g transform="translate(98.200 78.900) rotate(38) scale(1 .8)"><circle r="8.800" fill="url(#gr)"/></g><g transform="translate(97.300 80.600) rotate(38)"><ellipse rx="7.200" ry="4.700" fill="#fff"/></g></svg>
<svg class="a" style="left:145px;top:65px" width="32" height="33" viewBox="145 65 32 33"><rect x="146" y="66.800" width="29.800" height="30" rx="3" fill="#4b4b4b"/><g fill="#fff"><rect x="149.6" y="70.4" width="5.600" height="5.600"/><rect x="158.5" y="70.4" width="5.600" height="5.600"/><rect x="167.4" y="70.4" width="5.600" height="5.600"/><rect x="149.6" y="79.3" width="5.600" height="5.600"/><rect x="158.5" y="79.3" width="5.600" height="5.600"/><rect x="167.4" y="79.3" width="5.600" height="5.600"/><rect x="149.6" y="88.2" width="5.600" height="5.600"/><rect x="158.5" y="88.2" width="5.600" height="5.600"/><rect x="167.4" y="88.2" width="5.600" height="5.600"/></g></svg>
<svg class="a" style="left:206px;top:66px" width="31" height="31" viewBox="206 66 31 31"><defs><linearGradient id="fb" x1="0" y1="0" x2="0" y2="1"><stop offset="0" stop-color="#f1f4f5"/><stop offset="1" stop-color="#dfe6e8"/></linearGradient></defs><rect x="207.400" y="67.200" width="28" height="28" rx="1.500" fill="url(#fb)" stroke="#a9a9a9" stroke-width="1"/><g transform="translate(209 69) rotate(0)"><path d="M0 0H8.500L5.800 2.700L9.500 6.400L6.400 9.500L2.700 5.800L0 8.500Z" fill="#1c4a9a"/></g><g transform="translate(233.8 69) rotate(90)"><path d="M0 0H8.500L5.800 2.700L9.500 6.400L6.400 9.500L2.700 5.800L0 8.500Z" fill="#1c4a9a"/></g><g transform="translate(233.8 93.6) rotate(180)"><path d="M0 0H8.500L5.800 2.700L9.500 6.400L6.400 9.500L2.700 5.800L0 8.500Z" fill="#1c4a9a"/></g><g transform="translate(209 93.6) rotate(270)"><path d="M0 0H8.500L5.800 2.700L9.500 6.400L6.400 9.500L2.700 5.800L0 8.500Z" fill="#1c4a9a"/></g></svg>
<svg class="a" style="left:259px;top:66px" width="32" height="32" viewBox="259 66 32 32"><defs><linearGradient id="rf" x1="0" y1="0" x2="0" y2="1"><stop offset="0" stop-color="#7fb4ea"/><stop offset="1" stop-color="#2f6fc0"/></linearGradient></defs><ellipse cx="275" cy="95.500" rx="11" ry="1.500" fill="#e3e3e3"/><path d="M261.500 82C261 74 267 69.500 274 69.500C278 69.500 281 70.500 283.500 72.500L288 68.500V80.500H276L280 76.800C278.500 75.500 276.500 75 274.500 75C270 75 267.500 78 267 82Z" fill="url(#rf)" stroke="#2c62ad" stroke-width=".8" stroke-linejoin="round"/><path d="M288.500 80.500C289 88.500 283 93 276 93C272 93 269 92 266.500 90L262 94V82H274L270 85.700C271.500 87 273.500 87.500 275.500 87.500C280 87.500 282.500 84.500 283 80.500Z" fill="url(#rf)" stroke="#2c62ad" stroke-width=".8" stroke-linejoin="round"/></svg>
<svg class="a" style="left:321px;top:67px" width="30" height="30" viewBox="321 67 30 30"><rect x="323.2" y="69.3" width="15.800" height="17.300" rx="1" fill="#ededed" stroke="#bdbdbd" stroke-width="1"/><rect x="325.7" y="72.3" width="10.8" height="1.900" fill="#b5b5b5"/><rect x="325.7" y="75.4" width="10.8" height="1.900" fill="#b5b5b5"/><rect x="325.7" y="78.5" width="10.8" height="1.900" fill="#b5b5b5"/><rect x="325.7" y="81.6" width="10.8" height="1.900" fill="#b5b5b5"/><rect x="325.7" y="84.7" width="5.5" height="1.900" fill="#b5b5b5"/><rect x="333.2" y="77.2" width="15.800" height="17.300" rx="1" fill="#ededed" stroke="#bdbdbd" stroke-width="1"/><rect x="335.7" y="80.2" width="10.8" height="1.900" fill="#b5b5b5"/><rect x="335.7" y="83.3" width="10.8" height="1.900" fill="#b5b5b5"/><rect x="335.7" y="86.4" width="10.8" height="1.900" fill="#b5b5b5"/><rect x="335.7" y="89.5" width="10.8" height="1.900" fill="#b5b5b5"/><rect x="335.7" y="92.6" width="5.5" height="1.900" fill="#b5b5b5"/></svg>
<svg class="a" style="left:389px;top:66px" width="28" height="31" viewBox="389 66 28 31"><defs><linearGradient id="tf" x1="0" y1="1" x2="1" y2="0"><stop offset="0" stop-color="#4c9a44"/><stop offset=".3" stop-color="#b8c89a"/><stop offset=".5" stop-color="#e04a2c"/><stop offset=".7" stop-color="#d9c7b0"/><stop offset="1" stop-color="#c9b06a"/></linearGradient></defs><rect x="391" y="68.400" width="24" height="27" rx="4.500" fill="#e2513c" stroke="#1d1412" stroke-width="1.200"/><rect x="392.600" y="72" width="20.800" height="11.500" fill="url(#tf)"/><text x="403" y="93.300" text-anchor="middle" font-family="Liberation Sans,sans-serif" font-weight="bold" font-size="9" fill="#fff" letter-spacing="-.3">TIFF</text></svg>
<!-- window border -->
<div class="a" style="left:0;top:0;width:1051px;height:1px;background:#1f3d77"></div>
<div class="a" style="left:0;top:0;width:1px;height:722px;background:#1f3d77"></div>
<div class="a" style="left:1049px;top:0;width:2px;height:722px;background:#1f3d77"></div>
</body></html>
